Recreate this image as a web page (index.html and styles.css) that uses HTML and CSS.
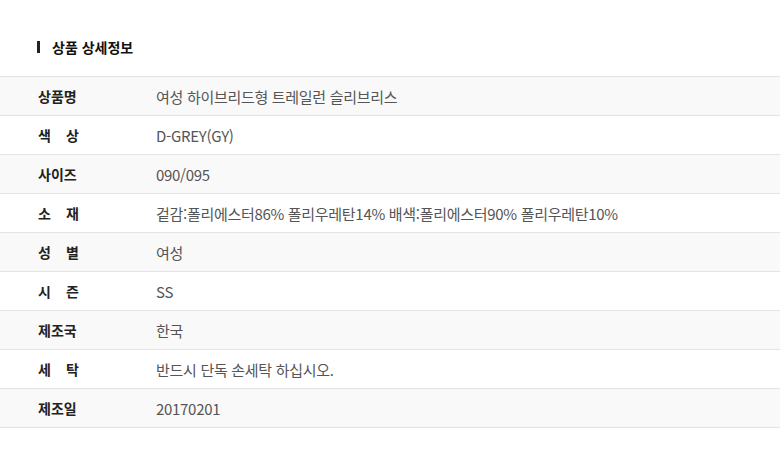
FILE: index.html
```html
<!DOCTYPE html>
<html lang="ko">
<head>
<meta charset="utf-8">
<link rel="stylesheet" href="styles.css">
</head>
<body>
<div class="page">
  <h2 class="title"><span class="bar"></span>상품 상세정보</h2>
  <div class="table">
    <div class="row alt"><div class="label"><span class="lb">상품명</span></div><div class="value">여성 하이브리드형 트레일런 슬리브리스</div></div>
    <div class="row"><div class="label"><span class="lb">색 상</span></div><div class="value">D-GREY(GY)</div></div>
    <div class="row alt"><div class="label"><span class="lb">사이즈</span></div><div class="value">090/095</div></div>
    <div class="row"><div class="label"><span class="lb">소 재</span></div><div class="value">겉감:폴리에스터86% 폴리우레탄14% 배색:폴리에스터90% 폴리우레탄10%</div></div>
    <div class="row alt"><div class="label"><span class="lb">성 별</span></div><div class="value">여성</div></div>
    <div class="row"><div class="label"><span class="lb">시 즌</span></div><div class="value">SS</div></div>
    <div class="row alt"><div class="label"><span class="lb">제조국</span></div><div class="value">한국</div></div>
    <div class="row"><div class="label"><span class="lb">세 탁</span></div><div class="value">반드시 단독 손세탁 하십시오.</div></div>
    <div class="row alt"><div class="label"><span class="lb">제조일</span></div><div class="value">20170201</div></div>
  </div>
</div>
</body>
</html>
```
FILE: styles.css
```css
* { box-sizing: border-box; }
html, body { margin: 0; padding: 0; background: #fff; }
body { font-family: "Noto Sans CJK KR", "Noto Sans", sans-serif; color: #222; }
.page { padding-top: 37px; }
.title {
  margin: 0 0 19px 0;
  padding-left: 37px;
  display: flex;
  align-items: center;
  font-size: 14px;
  font-weight: 700;
  line-height: 20px;
  color: #111;
}
.bar {
  display: inline-block;
  width: 3px;
  height: 12px;
  background: #222;
  margin-right: 12px;
}
.table { border-top: 1px solid #e3e3e3; }
.row {
  display: flex;
  align-items: center;
  height: 39px;
  border-bottom: 1px solid #e3e3e3;
  background: #fff;
}
.row.alt { background: #f9f9f9; }
.label {
  width: 156px;
  padding-left: 38px;
  font-size: 14px;
  font-weight: 700;
  color: #222;
}
.lb {
  display: inline-block;
  width: 41px;
  text-align: justify;
  text-align-last: justify;
}
.value {
  font-size: 15px;
  color: #555;
  letter-spacing: -0.3px;
}
```
